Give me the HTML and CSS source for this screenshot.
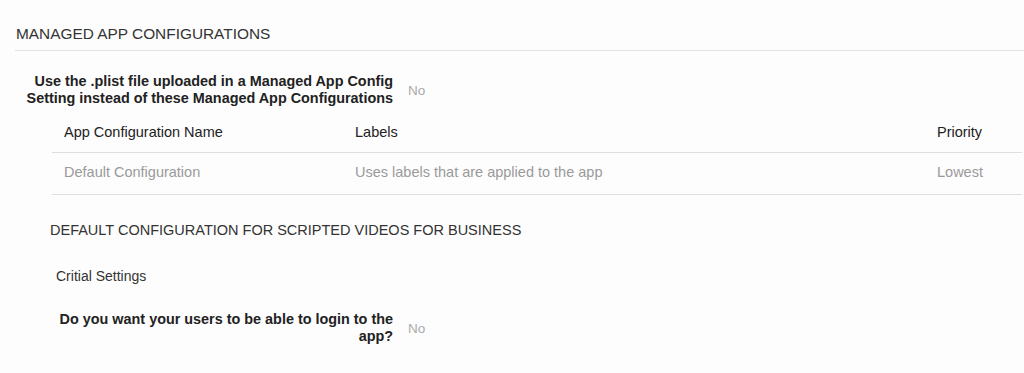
FILE: index.html
```html
<!DOCTYPE html>
<html lang="en">
<head>
    <meta charset="UTF-8">
    <meta name="viewport" content="width=device-width, initial-scale=1.0">
    <title>Managed App Configurations</title>
    <link rel="stylesheet" href="styles.css">
</head>
<body>
    <div class="section-title">MANAGED APP CONFIGURATIONS</div>

    <div class="field field-plist">
        <div class="field-label">Use the .plist file uploaded in a Managed App Config<br>Setting instead of these Managed App Configurations</div>
        <div class="field-value">No</div>
    </div>

    <table class="config-table">
        <colgroup>
            <col class="col-name">
            <col class="col-labels">
            <col class="col-priority">
        </colgroup>
        <thead>
            <tr>
                <th>App Configuration Name</th>
                <th>Labels</th>
                <th>Priority</th>
            </tr>
        </thead>
        <tbody>
            <tr>
                <td>Default Configuration</td>
                <td>Uses labels that are applied to the app</td>
                <td>Lowest</td>
            </tr>
        </tbody>
    </table>

    <div class="sub-title">DEFAULT CONFIGURATION FOR SCRIPTED VIDEOS FOR BUSINESS</div>
    <div class="group-title">Critial Settings</div>

    <div class="field field-login">
        <div class="field-label">Do you want your users to be able to login to the<br>app?</div>
        <div class="field-value">No</div>
    </div>
</body>
</html>
```

FILE: styles.css
```css
* {
    margin: 0;
    padding: 0;
    box-sizing: border-box;
}

body {
    background: #fdfdfd;
    font-family: 'Liberation Sans', Arial, sans-serif;
    color: #333;
    overflow: hidden;
}

.section-title {
    margin-left: 15px;
    padding: 25px 0 7px 1px;
    font-size: 15.4px;
    line-height: 18px;
    color: #333;
    border-bottom: 1px solid #e2e2e2;
}

.field {
    display: grid;
    grid-template-columns: 377px auto;
    column-gap: 15px;
    align-items: center;
    margin-left: 16px;
}

.field-plist {
    margin-top: 22px;
}

.field-login {
    margin-top: 26px;
}

.field-label {
    text-align: right;
    font-size: 14.4px;
    font-weight: bold;
    line-height: 17px;
    color: #222;
}

.field-value {
    font-size: 13.5px;
    color: #aaa;
}

.config-table {
    width: 970px;
    margin-left: 52px;
    border-collapse: collapse;
    table-layout: fixed;
    font-size: 14.5px;
    line-height: 18px;
}

.col-name { width: 291px; }
.col-labels { width: 582px; }
.col-priority { width: 97px; }

.config-table th {
    text-align: left;
    font-weight: normal;
    color: #222;
    padding: 16px 12px 11px;
    border-bottom: 1px solid #dedede;
}

.config-table td {
    color: #9a9a9a;
    padding: 10px 12px 13px;
    border-bottom: 1px solid #dedede;
}

.sub-title {
    margin: 26px 0 0 50px;
    font-size: 14.5px;
    line-height: 18px;
    color: #333;
}

.group-title {
    margin: 28px 0 0 56px;
    font-size: 14px;
    line-height: 18px;
    color: #333;
}
```
